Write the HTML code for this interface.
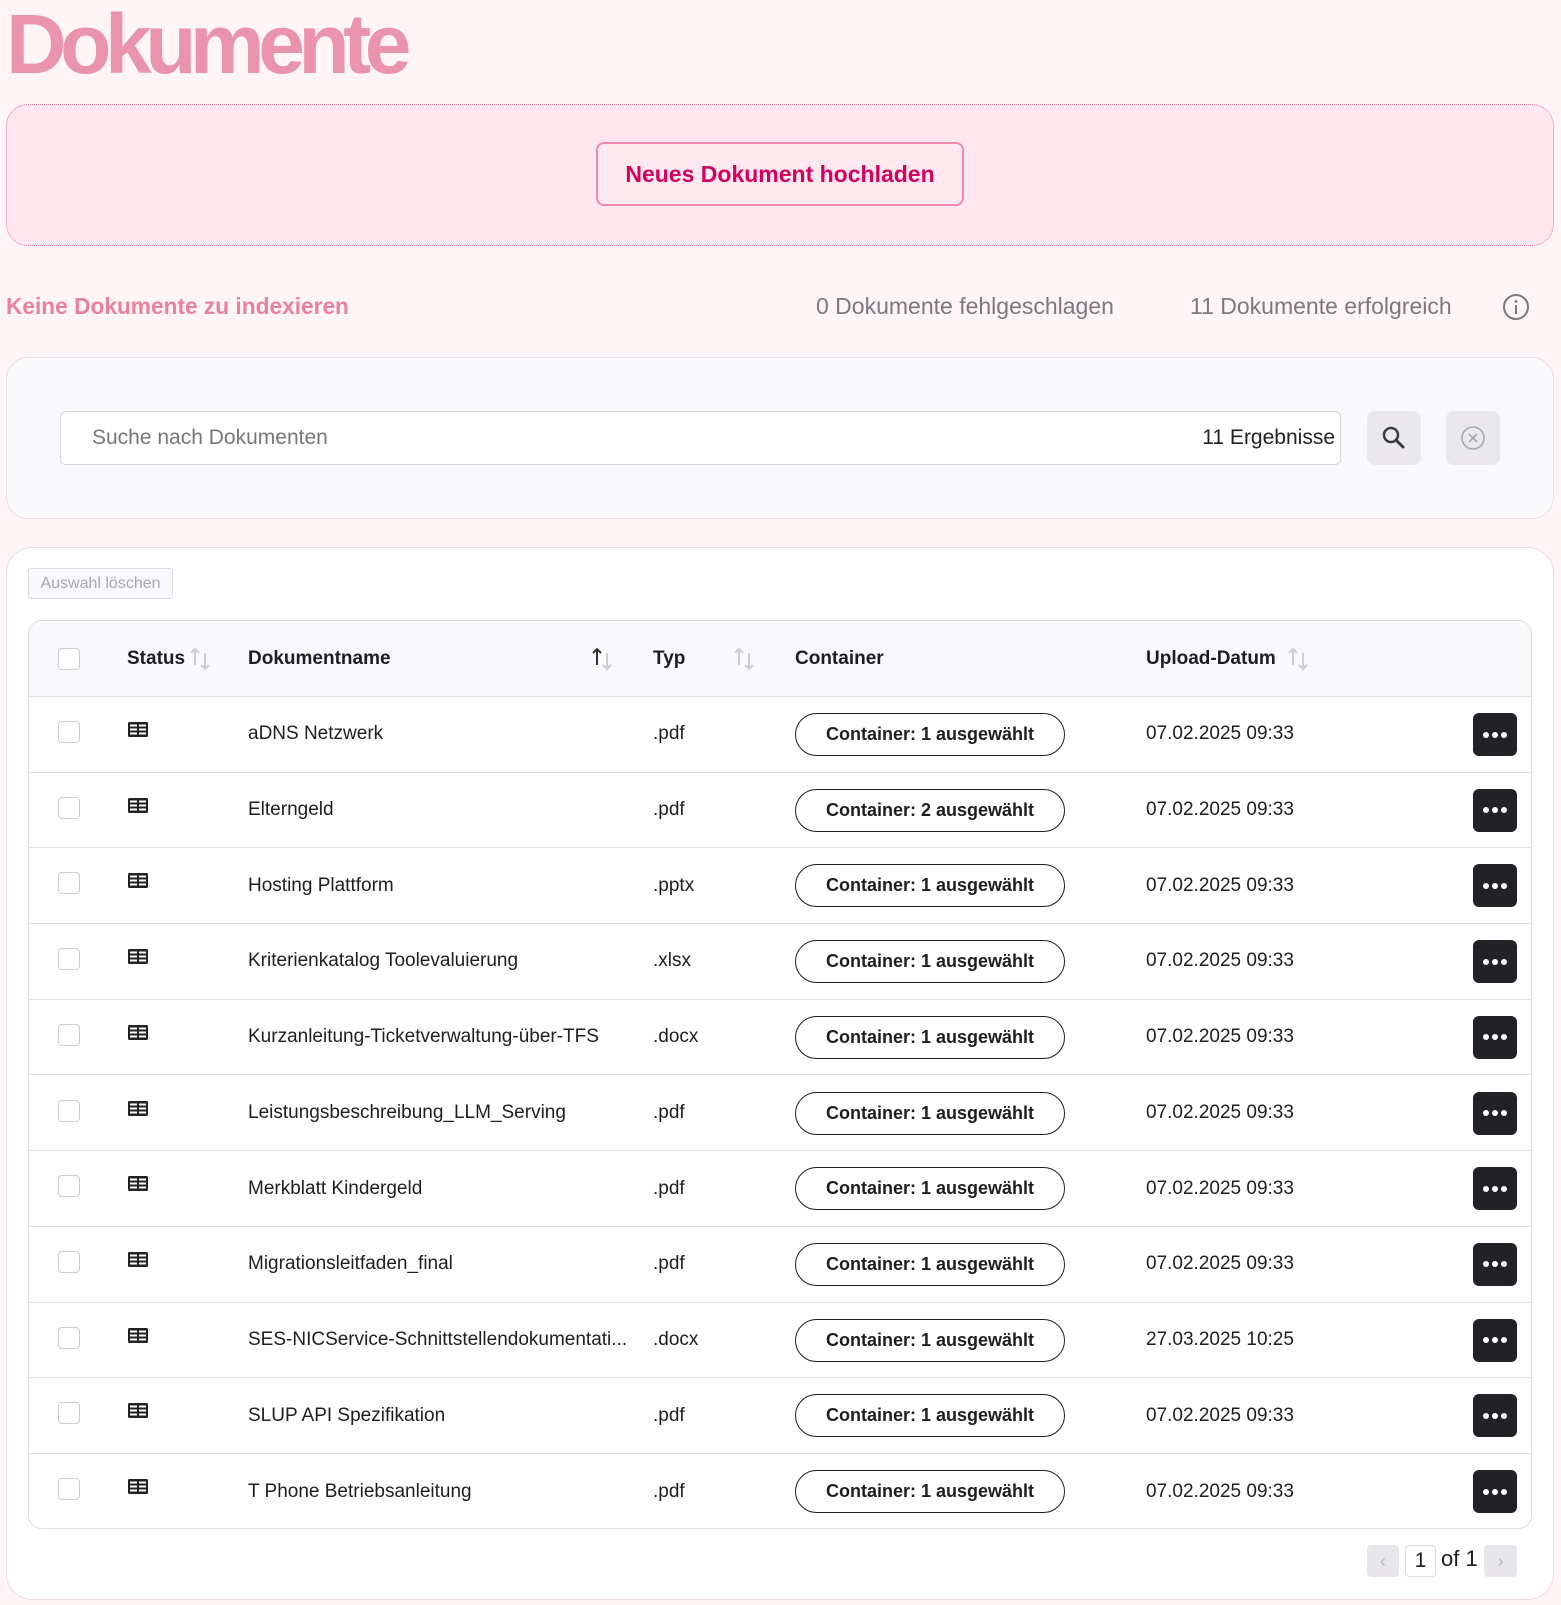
<!DOCTYPE html>
<html><head><meta charset="utf-8"><style>
*{box-sizing:border-box;margin:0;padding:0}
body{width:1561px;height:1605px;background:#fff5f6;font-family:"Liberation Sans",sans-serif;position:relative;overflow:hidden;color:#1e1e22}
.a{position:absolute}
h1{position:absolute;left:6px;top:-6px;font-size:84px;font-weight:bold;color:#e993ad;letter-spacing:-6.5px;line-height:100px}
.up{left:6px;top:104px;width:1548px;height:142px;background:#ffe7ed;border:1px dotted #e07aa5;border-radius:22px}
.upb{left:596px;top:142px;width:368px;height:64px;border:2px solid #f08aae;border-radius:8px;color:#d4005e;font-size:23px;font-weight:bold;display:flex;align-items:center;justify-content:center;background:#ffe9ef}
.st{top:293px;font-size:23px;color:#7a7880}
.card{background:#f9f8fa;border:1px solid #e8dfe4;border-radius:22px}
.inp{left:60px;top:411px;width:1281px;height:54px;background:#fff;border:1.5px solid #d8d6dc;border-radius:6px;font-size:21px}
.ib{width:54px;height:54px;background:#ebe8ec;border-radius:8px;display:flex;align-items:center;justify-content:center}
.tc{left:6px;top:547px;width:1548px;height:1053px;background:#fff;border:1px solid #ecdde3;border-radius:26px}
.tbl{left:28px;top:620px;width:1504px;height:909px;border:1.5px solid #dedce2;border-radius:14px;overflow:hidden}
.hd{position:absolute;left:0;top:0;width:100%;height:76px;background:#f9f8fa;border-bottom:1.5px solid #dedce2;font-weight:bold;font-size:19px}
.row{position:absolute;left:0;width:100%;height:75.7px;border-bottom:1.5px solid #e2e0e6;font-size:19px}
.cb{position:absolute;left:29px;width:22px;height:22px;border:1.5px solid #cfcdd3;border-radius:4px;background:#fff}
.t{position:absolute;top:50%;transform:translateY(-50%);white-space:nowrap}
.pill{position:absolute;left:766px;top:16px;width:270px;height:43px;border:1.5px solid #1e1e22;border-radius:22px;font-weight:bold;font-size:18px;display:flex;align-items:center;justify-content:center}
.dot{position:absolute;left:1444px;top:16px;width:44px;height:43px;background:#222226;border-radius:6px;color:#fff;display:flex;align-items:center;justify-content:center;gap:3px}
.dot i{width:6px;height:6px;border-radius:3px;background:#fff;display:block}
.ic{position:absolute;left:98px;top:24px}
</style></head><body>
<h1>Dokumente</h1>
<div class="a up"></div>
<div class="a upb">Neues Dokument hochladen</div>
<div class="a st" style="left:6px;color:#e8819f;font-weight:bold;font-size:22.7px">Keine Dokumente zu indexieren</div>
<div class="a st" style="left:816px">0 Dokumente fehlgeschlagen</div>
<div class="a st" style="left:1190px">11 Dokumente erfolgreich</div>
<svg class="a" style="left:1502px;top:293px" width="28" height="28" viewBox="0 0 28 28"><circle cx="14" cy="14" r="12" fill="none" stroke="#7a7880" stroke-width="2"/><circle cx="14" cy="8.5" r="1.4" fill="#7a7880"/><rect x="13" y="12" width="2" height="9" fill="#7a7880"/></svg>
<div class="a card" style="left:6px;top:357px;width:1548px;height:162px"></div>
<div class="a inp"><span class="t" style="left:31px;color:#777">Suche nach Dokumenten</span><span class="t" style="right:5px;color:#222">11 Ergebnisse</span></div>
<div class="a ib" style="left:1367px;top:411px"><svg width="26" height="26" viewBox="0 0 26 26"><circle cx="10" cy="10" r="7" fill="none" stroke="#3a3a40" stroke-width="2.5"/><path d="M15 15l7 7" stroke="#3a3a40" stroke-width="3" stroke-linecap="round"/></svg></div>
<div class="a ib" style="left:1446px;top:411px"><svg width="26" height="26" viewBox="0 0 26 26"><circle cx="13" cy="13" r="11" fill="none" stroke="#a8a6b0" stroke-width="1.6"/><path d="M9 9l8 8M17 9l-8 8" stroke="#a8a6b0" stroke-width="1.6"/></svg></div>
<div class="a tc"></div>
<div class="a" style="left:28px;top:568px;width:145px;height:31px;border:1.5px solid #dedce2;border-radius:3px;background:#f9f8fa;color:#a8a6b0;font-size:16px;display:flex;align-items:center;justify-content:center">Auswahl löschen</div>
<div class="a tbl">
<div class="hd"><div class="cb" style="top:27px"></div>
<span class="t" style="left:98px">Status</span>
<svg class="t" style="left:160px" width="24" height="28" viewBox="0 0 24 28"><path d="M6 20V4M2 8l4-4 4 4" stroke="#cfcdd5" stroke-width="2" fill="none"/><path d="M16 8v16M12 20l4 4 4-4" stroke="#cfcdd5" stroke-width="2" fill="none"/></svg>
<span class="t" style="left:219px">Dokumentname</span>
<svg class="t" style="left:562px" width="24" height="28" viewBox="0 0 24 28"><path d="M6 20V4M2 8l4-4 4 4" stroke="#333" stroke-width="2" fill="none"/><path d="M16 8v16M12 20l4 4 4-4" stroke="#cfcdd5" stroke-width="2" fill="none"/></svg>
<span class="t" style="left:624px">Typ</span>
<svg class="t" style="left:704px" width="24" height="28" viewBox="0 0 24 28"><path d="M6 20V4M2 8l4-4 4 4" stroke="#cfcdd5" stroke-width="2" fill="none"/><path d="M16 8v16M12 20l4 4 4-4" stroke="#cfcdd5" stroke-width="2" fill="none"/></svg>
<span class="t" style="left:766px">Container</span>
<span class="t" style="left:1117px">Upload-Datum</span>
<svg class="t" style="left:1258px" width="24" height="28" viewBox="0 0 24 28"><path d="M6 20V4M2 8l4-4 4 4" stroke="#cfcdd5" stroke-width="2" fill="none"/><path d="M16 8v16M12 20l4 4 4-4" stroke="#cfcdd5" stroke-width="2" fill="none"/></svg>
</div>
<div class="row" style="top:76px"><div class="cb" style="top:24px"></div><svg class="ic" width="22" height="18" viewBox="0 0 22 18"><rect x="1" y="1" width="20" height="15" rx="1.5" fill="#222" /><rect x="3" y="3.5" width="7" height="2" fill="#fff"/><rect x="12" y="3.5" width="7" height="2" fill="#fff"/><rect x="3" y="7.5" width="7" height="2" fill="#fff"/><rect x="12" y="7.5" width="7" height="2" fill="#fff"/><rect x="3" y="11.5" width="7" height="2" fill="#fff"/><rect x="12" y="11.5" width="7" height="2" fill="#fff"/></svg><span class="t" style="left:219px">aDNS Netzwerk</span><span class="t" style="left:624px">.pdf</span><div class="pill">Container: 1 ausgewählt</div><span class="t" style="left:1117px">07.02.2025 09:33</span><div class="dot"><i></i><i></i><i></i></div></div>
<div class="row" style="top:151.7px"><div class="cb" style="top:24px"></div><svg class="ic" width="22" height="18" viewBox="0 0 22 18"><rect x="1" y="1" width="20" height="15" rx="1.5" fill="#222" /><rect x="3" y="3.5" width="7" height="2" fill="#fff"/><rect x="12" y="3.5" width="7" height="2" fill="#fff"/><rect x="3" y="7.5" width="7" height="2" fill="#fff"/><rect x="12" y="7.5" width="7" height="2" fill="#fff"/><rect x="3" y="11.5" width="7" height="2" fill="#fff"/><rect x="12" y="11.5" width="7" height="2" fill="#fff"/></svg><span class="t" style="left:219px">Elterngeld</span><span class="t" style="left:624px">.pdf</span><div class="pill">Container: 2 ausgewählt</div><span class="t" style="left:1117px">07.02.2025 09:33</span><div class="dot"><i></i><i></i><i></i></div></div>
<div class="row" style="top:227.4px"><div class="cb" style="top:24px"></div><svg class="ic" width="22" height="18" viewBox="0 0 22 18"><rect x="1" y="1" width="20" height="15" rx="1.5" fill="#222" /><rect x="3" y="3.5" width="7" height="2" fill="#fff"/><rect x="12" y="3.5" width="7" height="2" fill="#fff"/><rect x="3" y="7.5" width="7" height="2" fill="#fff"/><rect x="12" y="7.5" width="7" height="2" fill="#fff"/><rect x="3" y="11.5" width="7" height="2" fill="#fff"/><rect x="12" y="11.5" width="7" height="2" fill="#fff"/></svg><span class="t" style="left:219px">Hosting Plattform</span><span class="t" style="left:624px">.pptx</span><div class="pill">Container: 1 ausgewählt</div><span class="t" style="left:1117px">07.02.2025 09:33</span><div class="dot"><i></i><i></i><i></i></div></div>
<div class="row" style="top:303.1px"><div class="cb" style="top:24px"></div><svg class="ic" width="22" height="18" viewBox="0 0 22 18"><rect x="1" y="1" width="20" height="15" rx="1.5" fill="#222" /><rect x="3" y="3.5" width="7" height="2" fill="#fff"/><rect x="12" y="3.5" width="7" height="2" fill="#fff"/><rect x="3" y="7.5" width="7" height="2" fill="#fff"/><rect x="12" y="7.5" width="7" height="2" fill="#fff"/><rect x="3" y="11.5" width="7" height="2" fill="#fff"/><rect x="12" y="11.5" width="7" height="2" fill="#fff"/></svg><span class="t" style="left:219px">Kriterienkatalog Toolevaluierung</span><span class="t" style="left:624px">.xlsx</span><div class="pill">Container: 1 ausgewählt</div><span class="t" style="left:1117px">07.02.2025 09:33</span><div class="dot"><i></i><i></i><i></i></div></div>
<div class="row" style="top:378.8px"><div class="cb" style="top:24px"></div><svg class="ic" width="22" height="18" viewBox="0 0 22 18"><rect x="1" y="1" width="20" height="15" rx="1.5" fill="#222" /><rect x="3" y="3.5" width="7" height="2" fill="#fff"/><rect x="12" y="3.5" width="7" height="2" fill="#fff"/><rect x="3" y="7.5" width="7" height="2" fill="#fff"/><rect x="12" y="7.5" width="7" height="2" fill="#fff"/><rect x="3" y="11.5" width="7" height="2" fill="#fff"/><rect x="12" y="11.5" width="7" height="2" fill="#fff"/></svg><span class="t" style="left:219px">Kurzanleitung-Ticketverwaltung-über-TFS</span><span class="t" style="left:624px">.docx</span><div class="pill">Container: 1 ausgewählt</div><span class="t" style="left:1117px">07.02.2025 09:33</span><div class="dot"><i></i><i></i><i></i></div></div>
<div class="row" style="top:454.5px"><div class="cb" style="top:24px"></div><svg class="ic" width="22" height="18" viewBox="0 0 22 18"><rect x="1" y="1" width="20" height="15" rx="1.5" fill="#222" /><rect x="3" y="3.5" width="7" height="2" fill="#fff"/><rect x="12" y="3.5" width="7" height="2" fill="#fff"/><rect x="3" y="7.5" width="7" height="2" fill="#fff"/><rect x="12" y="7.5" width="7" height="2" fill="#fff"/><rect x="3" y="11.5" width="7" height="2" fill="#fff"/><rect x="12" y="11.5" width="7" height="2" fill="#fff"/></svg><span class="t" style="left:219px">Leistungsbeschreibung_LLM_Serving</span><span class="t" style="left:624px">.pdf</span><div class="pill">Container: 1 ausgewählt</div><span class="t" style="left:1117px">07.02.2025 09:33</span><div class="dot"><i></i><i></i><i></i></div></div>
<div class="row" style="top:530.2px"><div class="cb" style="top:24px"></div><svg class="ic" width="22" height="18" viewBox="0 0 22 18"><rect x="1" y="1" width="20" height="15" rx="1.5" fill="#222" /><rect x="3" y="3.5" width="7" height="2" fill="#fff"/><rect x="12" y="3.5" width="7" height="2" fill="#fff"/><rect x="3" y="7.5" width="7" height="2" fill="#fff"/><rect x="12" y="7.5" width="7" height="2" fill="#fff"/><rect x="3" y="11.5" width="7" height="2" fill="#fff"/><rect x="12" y="11.5" width="7" height="2" fill="#fff"/></svg><span class="t" style="left:219px">Merkblatt Kindergeld</span><span class="t" style="left:624px">.pdf</span><div class="pill">Container: 1 ausgewählt</div><span class="t" style="left:1117px">07.02.2025 09:33</span><div class="dot"><i></i><i></i><i></i></div></div>
<div class="row" style="top:605.9px"><div class="cb" style="top:24px"></div><svg class="ic" width="22" height="18" viewBox="0 0 22 18"><rect x="1" y="1" width="20" height="15" rx="1.5" fill="#222" /><rect x="3" y="3.5" width="7" height="2" fill="#fff"/><rect x="12" y="3.5" width="7" height="2" fill="#fff"/><rect x="3" y="7.5" width="7" height="2" fill="#fff"/><rect x="12" y="7.5" width="7" height="2" fill="#fff"/><rect x="3" y="11.5" width="7" height="2" fill="#fff"/><rect x="12" y="11.5" width="7" height="2" fill="#fff"/></svg><span class="t" style="left:219px">Migrationsleitfaden_final</span><span class="t" style="left:624px">.pdf</span><div class="pill">Container: 1 ausgewählt</div><span class="t" style="left:1117px">07.02.2025 09:33</span><div class="dot"><i></i><i></i><i></i></div></div>
<div class="row" style="top:681.6px"><div class="cb" style="top:24px"></div><svg class="ic" width="22" height="18" viewBox="0 0 22 18"><rect x="1" y="1" width="20" height="15" rx="1.5" fill="#222" /><rect x="3" y="3.5" width="7" height="2" fill="#fff"/><rect x="12" y="3.5" width="7" height="2" fill="#fff"/><rect x="3" y="7.5" width="7" height="2" fill="#fff"/><rect x="12" y="7.5" width="7" height="2" fill="#fff"/><rect x="3" y="11.5" width="7" height="2" fill="#fff"/><rect x="12" y="11.5" width="7" height="2" fill="#fff"/></svg><span class="t" style="left:219px">SES-NICService-Schnittstellendokumentati...</span><span class="t" style="left:624px">.docx</span><div class="pill">Container: 1 ausgewählt</div><span class="t" style="left:1117px">27.03.2025 10:25</span><div class="dot"><i></i><i></i><i></i></div></div>
<div class="row" style="top:757.3px"><div class="cb" style="top:24px"></div><svg class="ic" width="22" height="18" viewBox="0 0 22 18"><rect x="1" y="1" width="20" height="15" rx="1.5" fill="#222" /><rect x="3" y="3.5" width="7" height="2" fill="#fff"/><rect x="12" y="3.5" width="7" height="2" fill="#fff"/><rect x="3" y="7.5" width="7" height="2" fill="#fff"/><rect x="12" y="7.5" width="7" height="2" fill="#fff"/><rect x="3" y="11.5" width="7" height="2" fill="#fff"/><rect x="12" y="11.5" width="7" height="2" fill="#fff"/></svg><span class="t" style="left:219px">SLUP API Spezifikation</span><span class="t" style="left:624px">.pdf</span><div class="pill">Container: 1 ausgewählt</div><span class="t" style="left:1117px">07.02.2025 09:33</span><div class="dot"><i></i><i></i><i></i></div></div>
<div class="row" style="top:833px;border-bottom:none"><div class="cb" style="top:24px"></div><svg class="ic" width="22" height="18" viewBox="0 0 22 18"><rect x="1" y="1" width="20" height="15" rx="1.5" fill="#222" /><rect x="3" y="3.5" width="7" height="2" fill="#fff"/><rect x="12" y="3.5" width="7" height="2" fill="#fff"/><rect x="3" y="7.5" width="7" height="2" fill="#fff"/><rect x="12" y="7.5" width="7" height="2" fill="#fff"/><rect x="3" y="11.5" width="7" height="2" fill="#fff"/><rect x="12" y="11.5" width="7" height="2" fill="#fff"/></svg><span class="t" style="left:219px">T Phone Betriebsanleitung</span><span class="t" style="left:624px">.pdf</span><div class="pill">Container: 1 ausgewählt</div><span class="t" style="left:1117px">07.02.2025 09:33</span><div class="dot"><i></i><i></i><i></i></div></div>
</div>
<div class="a" style="left:1367px;top:1545px;width:32px;height:32px;background:#e8e6ea;border-radius:4px;color:#b8b6c0;font-size:18px;display:flex;align-items:center;justify-content:center">‹</div>
<div class="a" style="left:1405px;top:1545px;width:31px;height:32px;background:#fff;border:1px solid #dedce2;border-radius:4px;font-size:21px;display:flex;align-items:center;justify-content:center">1</div>
<div class="a" style="left:1441px;top:1546px;font-size:22px">of 1</div>
<div class="a" style="left:1484px;top:1545px;width:33px;height:32px;background:#e8e6ea;border-radius:4px;color:#b8b6c0;font-size:18px;display:flex;align-items:center;justify-content:center">›</div>
</body></html>
